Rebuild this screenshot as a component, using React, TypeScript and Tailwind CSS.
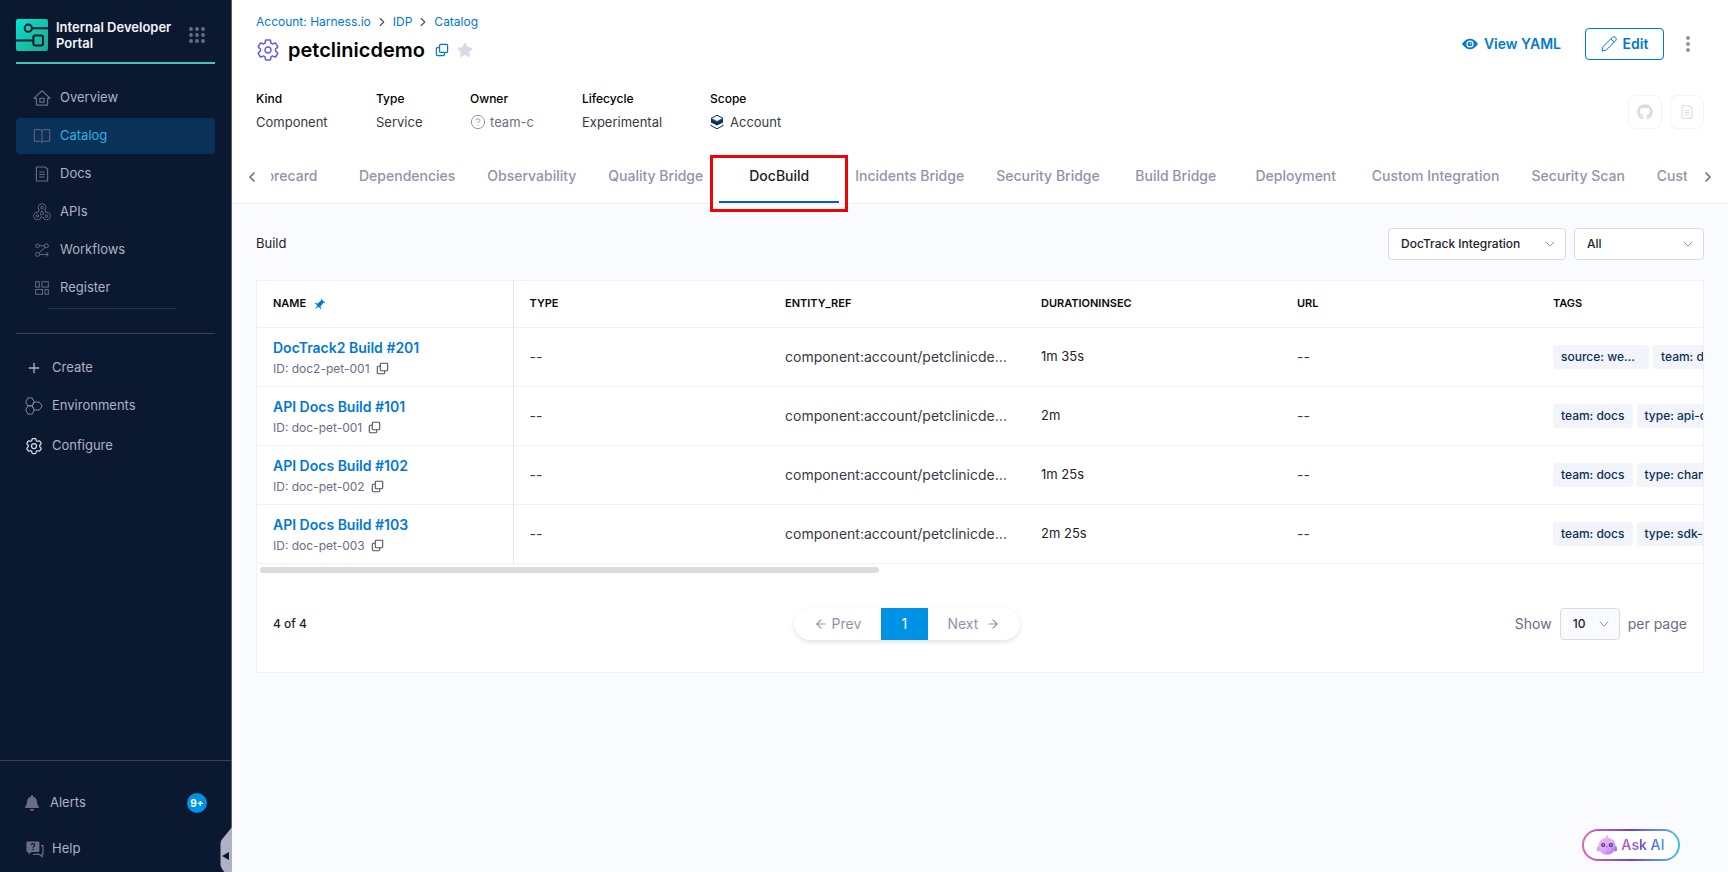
import type { ReactNode } from "react";
import { ChevronDown, ChevronLeft, ChevronRight, CircleHelp, Plus, ArrowLeft, ArrowRight } from "lucide-react";
import { FaBell, FaGithub, FaStar } from "react-icons/fa";
import { HiOutlineCog6Tooth } from "react-icons/hi2";
import { IoSettingsOutline } from "react-icons/io5";

function LogoIcon() {
  return (
    <svg width="32" height="32" viewBox="0 0 32 32" fill="none" className="shrink-0">
      <defs>
        <linearGradient id="logo" x1="0" y1="0" x2="1" y2="1">
          <stop offset="0" stopColor="#04e3cf" />
          <stop offset="1" stopColor="#22a68f" />
        </linearGradient>
      </defs>
      <rect width="32" height="32" rx="2" fill="url(#logo)" />
      <g stroke="#0a192f" strokeWidth="2">
        <circle cx="12.3" cy="9.2" r="3.6" />
        <path d="M16 9.2h16M0 21.4h17" />
        <rect x="17.4" y="16.6" width="9.6" height="9.8" rx="1.6" />
      </g>
    </svg>
  );
}

function AppsIcon() {
  const spots = [2, 8, 14];
  return (
    <svg width="16" height="16" viewBox="0 0 16 16" fill="#6b6d85">
      {spots.map((y) => spots.map((x) => <circle key={`${x}-${y}`} cx={x} cy={y} r="1.9" />))}
    </svg>
  );
}

function HomeIcon() {
  return (
    <svg width="18" height="18" viewBox="0 0 18 18" fill="none" stroke="currentColor" strokeWidth="1.2">
      <path d="M1 9.3 9 1.7l8 7.6h-2.4v6.8H3.4V9.3z" strokeLinejoin="round" />
      <rect x="6.9" y="9.4" width="4.2" height="3.8" />
    </svg>
  );
}

function BookIcon() {
  return (
    <svg width="18" height="18" viewBox="0 0 18 18" fill="none" stroke="currentColor">
      <path d="M9 3.6C8.4 2.9 7.7 2.6 6.8 2.6H1.3v11.6h5.4c1 0 1.8.5 2.3 1.6.5-1.1 1.3-1.6 2.3-1.6h5.4V2.6h-5.5c-.9 0-1.6.3-2.2 1zM9 3.6v12" strokeLinejoin="round" />
    </svg>
  );
}

function DocIcon({ size = 18 }: { size?: number }) {
  return (
    <svg width={size} height={size} viewBox="0 0 18 18" fill="none" stroke="currentColor" strokeWidth="1.2">
      <path d="M3.4 2h8.8l2.4 2.4V16H3.4z" strokeLinejoin="round" />
      <path d="M6.2 7h5.6M6.2 9.5h5.6M6.2 12h5.6" />
    </svg>
  );
}

function WebhookIcon() {
  const joints = "M9 4.6 4.6 13M9 4.6 13.4 13H9";
  return (
    <svg width="18" height="18" viewBox="0 0 18 18" fill="none" stroke="currentColor">
      <circle cx="9" cy="4.6" r="3.8" />
      <circle cx="4.4" cy="13" r="3.8" />
      <circle cx="13.6" cy="13" r="3.8" />
      <path d={joints} strokeWidth="3.6" />
      <g stroke="#0a192f" fill="#0a192f">
        <path d={joints} strokeWidth="1.8" fill="none" />
        <circle cx="9" cy="4.6" r="2.7" />
        <circle cx="4.4" cy="13" r="2.7" />
        <circle cx="13.6" cy="13" r="2.7" />
      </g>
      <circle cx="9" cy="4.6" r="1.3" />
      <circle cx="4.4" cy="13" r="1.3" />
      <circle cx="13.6" cy="13" r="1.3" />
    </svg>
  );
}

function WorkflowIcon() {
  return (
    <svg width="18" height="18" viewBox="0 0 18 18" fill="none" stroke="currentColor">
      <circle cx="4.4" cy="4.8" r="1.8" />
      <circle cx="13.4" cy="4.8" r="2" />
      <circle cx="4.6" cy="13.4" r="2" />
      <path d="M6.2 4.8h5.2M12 6.3l-5.8 5.6M6.6 13.4h8.6M13 11.2l2.4 2.2-2.4 2.2" />
    </svg>
  );
}

function RegisterIcon() {
  return (
    <svg width="18" height="18" viewBox="0 0 18 18" fill="none" stroke="currentColor">
      <rect x="2.7" y="2.7" width="3.6" height="5.4" />
      <rect x="8.9" y="2.7" width="6.4" height="5.4" />
      <rect x="2.7" y="10.5" width="6.8" height="4.8" />
      <rect x="12" y="10.5" width="3.3" height="4.8" />
    </svg>
  );
}

function EnvironmentsIcon() {
  return (
    <svg width="18" height="18" viewBox="0 0 18 18" fill="none" stroke="currentColor" strokeLinejoin="round">
      <path d="M2.9.9h4.3l2.1 3.9-2.1 4H2.9L.7 4.8zM2.9 8.8h4.3l2.1 4.1-2.1 4.2H2.9L.7 12.9z" />
      <path d="M9 5h5.2l3 4-3 4.1H9.2L7.2 8.9z" />
    </svg>
  );
}

function HelpIcon() {
  return (
    <svg width="18" height="17" viewBox="0 0 18 17" fill="none">
      <path d="M1.6.5h10.6c.7 0 1.2.5 1.2 1.2v8c0 .7-.5 1.2-1.2 1.2H5.6L2.4 13.6v-2.7h-.8c-.7 0-1.2-.5-1.2-1.2v-8C.4 1 .9.5 1.6.5z" fill="currentColor" />
      <path d="M15 4.6h2v8.7h-1v2.4l-2.7-2.4H7" stroke="currentColor" strokeWidth="1.2" />
      <path d="M5.3 4.1c.1-2.1 3.4-2.1 3.4 0 0 1.2-1.6 1.2-1.6 2.6M7.1 7.8v1.4" stroke="#0a192f" strokeWidth="1.3" />
    </svg>
  );
}

function CopyIcon({ size = 14 }: { size?: number }) {
  return (
    <svg width={size} height={size} viewBox="0 0 14 14" fill="none" stroke="currentColor" strokeWidth="1.2">
      <rect x="4.6" y="1.4" width="8" height="8" rx="1" />
      <path d="M4.6 4.6H2.4a1 1 0 0 0-1 1v6a1 1 0 0 0 1 1h6a1 1 0 0 0 1-1V9.4" />
    </svg>
  );
}

function PinIcon() {
  return (
    <svg width="12" height="12" viewBox="0 0 16 16" fill="currentColor">
      <path d="M9.41.92c-.51.51-.41 1.5.15 2.56L4.34 7.54C2.8 6.48 1.45 6.05.92 6.58l3.54 3.54-3.54 4.95 4.95-3.54 3.54 3.54c.53-.53.1-1.88-.96-3.42l4.06-5.22c1.06.56 2.04.66 2.55.15L9.41.92z" />
    </svg>
  );
}

function LayersIcon() {
  return (
    <svg width="14" height="16" viewBox="0 0 14 16" fill="none">
      <path d="M7 1.2 13 4.4 7 7.6 1 4.4z" fill="#fff" stroke="#07305c" strokeLinejoin="round" />
      <path d="M1 4.8 7 8l6-3.2v3.6l-6 3.2-6-3.2z" fill="#07305c" />
      <path d="M1 10.6v1l6 3.2 6-3.2v-1" stroke="#07305c" strokeLinejoin="round" />
    </svg>
  );
}

function EyeIcon() {
  return (
    <svg width="16" height="12" viewBox="0 0 16 12">
      <path d="M0 6C2.6 2.3 5.2.8 8 .8S13.4 2.3 16 6c-2.6 3.7-5.2 5.2-8 5.2S2.6 9.7 0 6z" fill="currentColor" />
      <circle cx="8" cy="6" r="3.6" fill="#fff" />
      <circle cx="8" cy="6" r="2.3" fill="currentColor" />
      <circle cx="8.5" cy="5.6" r=".8" fill="#fff" />
    </svg>
  );
}

function PencilIcon() {
  return (
    <svg width="16" height="16" viewBox="0 0 16 16" fill="none" stroke="currentColor" strokeLinejoin="round">
      <path d="M.9 15.1 2 10.7 11.3 1.4a2.1 2.1 0 0 1 3 0l.3.3a2.1 2.1 0 0 1 0 3L5.3 14zM9.9 2.9l3.2 3.2" />
    </svg>
  );
}

function RobotIcon() {
  return (
    <svg width="20" height="20" viewBox="0 0 20 20">
      <defs>
        <linearGradient id="robot" x1="0" y1="0" x2="1" y2="1">
          <stop offset="0" stopColor="#f7b6ee" />
          <stop offset=".55" stopColor="#dfa5f8" />
          <stop offset="1" stopColor="#9d6df0" />
        </linearGradient>
      </defs>
      <circle cx="10" cy="1.3" r="1" fill="#f3a9dd" />
      <rect x="9.5" y="1.5" width="1" height="3" fill="#e9a3ea" />
      <rect x="0" y="11.5" width="3" height="5" rx="1.4" fill="#d59af2" />
      <rect x="17" y="11.5" width="3" height="5" rx="1.4" fill="#9a74ee" />
      <circle cx="10" cy="11.2" r="8.6" fill="url(#robot)" />
      <circle cx="6.2" cy="10" r="2.1" fill="#3c3690" />
      <circle cx="13.8" cy="10" r="2.1" fill="#3c3690" />
      <circle cx="6.2" cy="9.9" r=".8" fill="#c9c4ff" />
      <circle cx="13.8" cy="9.9" r=".8" fill="#c9c4ff" />
      <path d="M9 11.6h2l-1 1z" fill="#3c3690" />
    </svg>
  );
}

const mainNav = [
  { label: "Overview", icon: <HomeIcon /> },
  { label: "Catalog", icon: <BookIcon />, active: true },
  { label: "Docs", icon: <DocIcon /> },
  { label: "APIs", icon: <WebhookIcon /> },
  { label: "Workflows", icon: <WorkflowIcon /> },
  { label: "Register", icon: <RegisterIcon /> },
];

const meta: { label: string; value: ReactNode; width: string }[] = [
  { label: "Kind", value: "Component", width: "w-[120px]" },
  { label: "Type", value: "Service", width: "w-[94px]" },
  {
    label: "Owner",
    width: "w-28",
    value: (
      <span className="flex items-center gap-1 text-[#6b6d85]">
        <CircleHelp size={16} strokeWidth={1.5} className="text-[#9293ab]" />
        team-c
      </span>
    ),
  },
  { label: "Lifecycle", value: "Experimental", width: "w-32" },
  {
    label: "Scope",
    width: "w-24",
    value: (
      <span className="flex items-center gap-1.5">
        <LayersIcon />
        Account
      </span>
    ),
  },
];

const tabs = [
  "Scorecard",
  "Dependencies",
  "Observability",
  "Quality Bridge",
  "DocBuild",
  "Incidents Bridge",
  "Security Bridge",
  "Build Bridge",
  "Deployment",
  "Custom Integration",
  "Security Scan",
  "Custom Build",
];

const columns = ["TYPE", "ENTITY_REF", "DURATIONINSEC", "URL", "TAGS"];

const builds = [
  { name: "DocTrack2 Build #201", id: "doc2-pet-001", duration: "1m 35s", tags: ["source: webhook", "team: docs"] },
  { name: "API Docs Build #101", id: "doc-pet-001", duration: "2m", tags: ["team: docs", "type: api-docs"] },
  { name: "API Docs Build #102", id: "doc-pet-002", duration: "1m 25s", tags: ["team: docs", "type: changelog"] },
  { name: "API Docs Build #103", id: "doc-pet-003", duration: "2m 25s", tags: ["team: docs", "type: sdk-docs"] },
];

function Sidebar() {
  return (
    <aside className="relative flex w-[232px] shrink-0 flex-col border-r border-[#5a5c70] bg-[#0a192f] text-[13px] text-[#b0b1c4]">
      <div className="mx-4 flex items-center border-b-2 border-[#3dc7b0] pt-[19px] pb-[11px]">
        <LogoIcon />
        <h2 className="ml-2 flex-1 leading-4 font-semibold text-[#f3f3fa]">
          Internal Developer
          <br />
          Portal
        </h2>
        <button aria-label="Switch module" className="mr-2.5">
          <AppsIcon />
        </button>
      </div>

      <nav className="mx-4 mt-4 flex flex-col gap-0.5">
        {mainNav.map((item) => (
          <a
            key={item.label}
            href="#"
            className={[
              "flex h-9 items-center gap-[9px] rounded pl-[17px]",
              item.active ? "bg-[#0c3158] text-[#2fb0e0]" : "",
            ].join(" ")}
          >
            <span className="text-[#66688a]">{item.icon}</span>
            {item.label}
          </a>
        ))}
      </nav>
      <div className="mt-0.5 mr-[55px] ml-12 border-t border-[#22304a]" />

      <nav className="mx-4 mt-6 flex flex-col gap-0.5 border-t border-[#3b4154] pt-4">
        <a href="#" className="flex h-9 items-center gap-[9px] pl-[9px]">
          <span className="flex w-[18px] justify-center">
            <Plus size={16} strokeWidth={2} />
          </span>
          Create
        </a>
        <a href="#" className="flex h-9 items-center gap-[9px] pl-[9px]">
          <span className="text-[#85879d]">
            <EnvironmentsIcon />
          </span>
          Environments
        </a>
        <a href="#" className="flex h-10 items-center gap-2 pl-2">
          <HiOutlineCog6Tooth size={20} className="text-[#d9dae5]" />
          Configure
        </a>
      </nav>

      <div className="mt-auto flex flex-col gap-2.5 border-t border-[#3b4154] px-6 pt-6 pb-[5px]">
        <a href="#" className="flex h-9 items-center gap-2.5">
          <FaBell size={16} className="text-[#6b6d85]" />
          Alerts
          <span className="ml-auto flex size-5 items-center justify-center rounded-full bg-[#0092e4] text-[10px] font-bold text-white">
            9+
          </span>
        </a>
        <a href="#" className="flex h-9 items-center gap-2 pl-0.5">
          <span className="text-[#6b6d85]">
            <HelpIcon />
          </span>
          Help
        </a>
      </div>

      <button aria-label="Collapse sidebar" className="absolute -right-px bottom-0">
        <svg width="12" height="45" viewBox="0 0 12 45">
          <path d="M12 0 1.5 13Q.5 14.5.5 17v20q0 4 4 8H12z" fill="#b0b1c4" />
          <path d="M9 25v8l-7-4z" fill="#0a192f" />
        </svg>
      </button>
    </aside>
  );
}

function EntityHeader() {
  return (
    <header className="border-b border-[#edeffa] bg-white">
      <div className="flex items-end justify-between px-6 pt-3.5">
        <div>
          <nav aria-label="Breadcrumb" className="flex items-center gap-1 text-xs leading-4 text-[#0278d5]">
            <a href="#">Account: Harness.io</a>
            <ChevronRight size={14} className="text-[#4f5162]" />
            <a href="#">IDP</a>
            <ChevronRight size={14} className="text-[#4f5162]" />
            <a href="#">Catalog</a>
          </nav>
          <div className="mt-1.5 flex items-center">
            <IoSettingsOutline size={24} className="text-[#6259ee]" />
            <h1 className="ml-2 text-xl leading-7 font-semibold text-black">petclinicdemo</h1>
            <button aria-label="Copy name" className="ml-2.5 text-[#0278d5]">
              <CopyIcon />
            </button>
            <button aria-label="Add to favourites" className="ml-2 text-[#d9dae5]">
              <FaStar size={16} />
            </button>
          </div>
        </div>
        <div className="flex items-center pb-1 text-sm font-semibold text-[#0278d5]">
          <button className="flex items-center gap-1.5">
            <EyeIcon />
            View YAML
          </button>
          <button className="ml-6 flex h-8 w-[79px] items-center justify-center gap-1.5 rounded border border-[#0278d5]">
            <PencilIcon />
            Edit
          </button>
          <button aria-label="More actions" className="mr-3.5 ml-[22px]">
            <svg width="4" height="16" viewBox="0 0 4 16" fill="#9293ab">
              <circle cx="2" cy="2" r="2" />
              <circle cx="2" cy="8" r="2" />
              <circle cx="2" cy="14" r="2" />
            </svg>
          </button>
        </div>
      </div>

      <div className="mt-[27px] flex items-center justify-between px-6">
        <dl className="flex">
          {meta.map((item) => (
            <div key={item.label} className={item.width}>
              <dt className="text-xs leading-4 font-medium text-black">{item.label}</dt>
              <dd className="mt-[5px] text-[13px] leading-5 text-[#383946]">{item.value}</dd>
            </div>
          ))}
        </dl>
        <div className="flex gap-2 text-[#d9dae5]">
          <a href="#" aria-label="Source" className="flex size-[34px] items-center justify-center rounded-lg border border-[#f3f3fa]">
            <FaGithub size={16} />
          </a>
          <a href="#" aria-label="Docs" className="flex size-[34px] items-center justify-center rounded-lg border border-[#f3f3fa]">
            <DocIcon size={16} />
          </a>
        </div>
      </div>

      <div className="mt-[18px] flex items-center px-3">
        <button aria-label="Scroll left" className="mr-[11px] text-[#6b6d85]">
          <ChevronLeft size={16} strokeWidth={2.5} />
        </button>
        <div className="min-w-0 flex-1 overflow-x-clip">
          <div role="tablist" className="-ml-12 flex">
            {tabs.map((tab) => {
              const active = tab === "DocBuild";
              return (
                <button
                  key={tab}
                  role="tab"
                  aria-selected={active}
                  className={[
                    "relative h-[53px] min-w-[120px] shrink-0 border-b-2 px-4 text-sm font-medium",
                    active ? "border-[#0a5bd3] text-[#1c1c28]" : "border-transparent text-[#9293ab]",
                  ].join(" ")}
                >
                  {tab}
                  {active && (
                    <span className="pointer-events-none absolute -inset-x-[9px] top-[5px] -bottom-[11px] border-3 border-[#ee0404]" />
                  )}
                </button>
              );
            })}
          </div>
        </div>
        <button aria-label="Scroll right" className="ml-[13px] text-[#6b6d85]">
          <ChevronRight size={16} strokeWidth={2.5} />
        </button>
      </div>
    </header>
  );
}

function Picker({ label, options, className }: { label: string; options: string[]; className: string }) {
  return (
    <span className="relative flex">
      <select
        aria-label={label}
        className={["h-8 appearance-none rounded border border-[#d9dae5] pl-3 font-medium text-[#22222a]", className].join(" ")}
      >
        {options.map((option) => (
          <option key={option}>{option}</option>
        ))}
      </select>
      <ChevronDown size={16} strokeWidth={1.5} className="pointer-events-none absolute top-2 right-2 text-[#9293ab]" />
    </span>
  );
}

function BuildTable() {
  return (
    <div className="overflow-hidden">
      <table className="w-[1536px] table-fixed border-collapse text-left text-sm">
        <thead>
          <tr className="h-[46px] border-b border-[#f0f1f8] text-[11px] text-[#0b0b0d]">
            <th className="w-64 border-r border-[#e4e5ee] px-4 font-semibold">
              <span className="flex items-center gap-2">
                NAME
                <span className="text-[#0278d5]">
                  <PinIcon />
                </span>
              </span>
            </th>
            {columns.map((column) => (
              <th key={column} className="px-4 font-semibold">
                {column}
              </th>
            ))}
          </tr>
        </thead>
        <tbody className="text-[#383946]">
          {builds.map((build) => (
            <tr key={build.id} className="h-[59px] border-b border-[#f0f1f8]">
              <td className="border-r border-[#e4e5ee] px-4 pt-0.5">
                <a href="#" className="block leading-5 font-semibold text-[#0278d5]">
                  {build.name}
                </a>
                <div className="mt-0.5 flex items-center gap-1.5 text-xs leading-[18px] text-[#6b6d85]">
                  ID: {build.id}
                  <button aria-label="Copy ID" className="text-[#4f5162]">
                    <CopyIcon size={13} />
                  </button>
                </div>
              </td>
              <td className="px-4">--</td>
              <td className="truncate px-4">component:account/petclinicdemo</td>
              <td className="px-4 text-[13px] text-[#22222a]">{build.duration}</td>
              <td className="px-4">--</td>
              <td className="px-4">
                <div className="flex gap-1">
                  {build.tags.map((tag) => (
                    <span
                      key={tag}
                      className="h-6 max-w-24 shrink-0 truncate rounded bg-[#f3f3fa] px-2 text-xs leading-6 font-medium text-[#07305c]"
                    >
                      {tag}
                    </span>
                  ))}
                </div>
              </td>
            </tr>
          ))}
        </tbody>
      </table>
      <div className="px-[3px] pt-[3px]">
        <div className="h-1.5 w-[43%] rounded-full bg-[#dcdcdc]" />
      </div>
    </div>
  );
}

export default function App() {
  return (
    <div className="flex min-h-screen bg-[#fafbff] font-[Inter,sans-serif]">
      <Sidebar />
      <div className="min-w-0 flex-1">
        <EntityHeader />
        <main className="px-6 pt-6">
          <div className="flex items-center justify-between text-[13px]">
            <h2 className="text-[#22222a]">Build</h2>
            <div className="flex gap-2 text-xs">
              <Picker label="Integration" options={["DocTrack Integration"]} className="w-[178px] bg-white" />
              <Picker label="Filter" options={["All"]} className="w-[130px] bg-white" />
            </div>
          </div>

          <section className="mt-5 border border-[#eff0fa] bg-white">
            <BuildTable />
            <div className="flex items-center justify-between px-4 pt-[35px] pb-8 text-sm text-[#6b6d85]">
              <span className="text-xs font-medium text-[#22222a]">4 of 4</span>
              <div className="flex h-8 items-center rounded-full text-[#9293ab] shadow-[0_2px_4px_rgba(40,41,61,0.14)]">
                <button className="flex h-8 w-[87px] items-center justify-center gap-1">
                  <ArrowLeft size={14} />
                  Prev
                </button>
                <button aria-current="page" className="h-8 w-[47px] bg-[#0092e4] text-white">
                  1
                </button>
                <button className="flex h-8 w-[92px] items-center justify-center gap-2">
                  Next
                  <ArrowRight size={14} />
                </button>
              </div>
              <div className="flex items-center gap-2 pl-2">
                Show
                <span className="text-xs">
                  <Picker label="Rows per page" options={["10"]} className="w-[60px] bg-[#fafbff]" />
                </span>
                per page
              </div>
            </div>
          </section>
        </main>
      </div>

      <button className="fixed right-12 bottom-[11px] w-[98px] rounded-full bg-linear-to-r from-[#e75fb6] via-[#6a3fd8] to-[#3ec3e4] p-[2px]">
        <span className="flex h-7 items-center justify-center gap-1 rounded-full bg-white">
          <RobotIcon />
          <span className="bg-linear-to-r from-[#d25fb8] via-[#6a4fd8] to-[#3fa6e4] bg-clip-text text-sm font-semibold text-transparent">
            Ask AI
          </span>
        </span>
      </button>
    </div>
  );
}
